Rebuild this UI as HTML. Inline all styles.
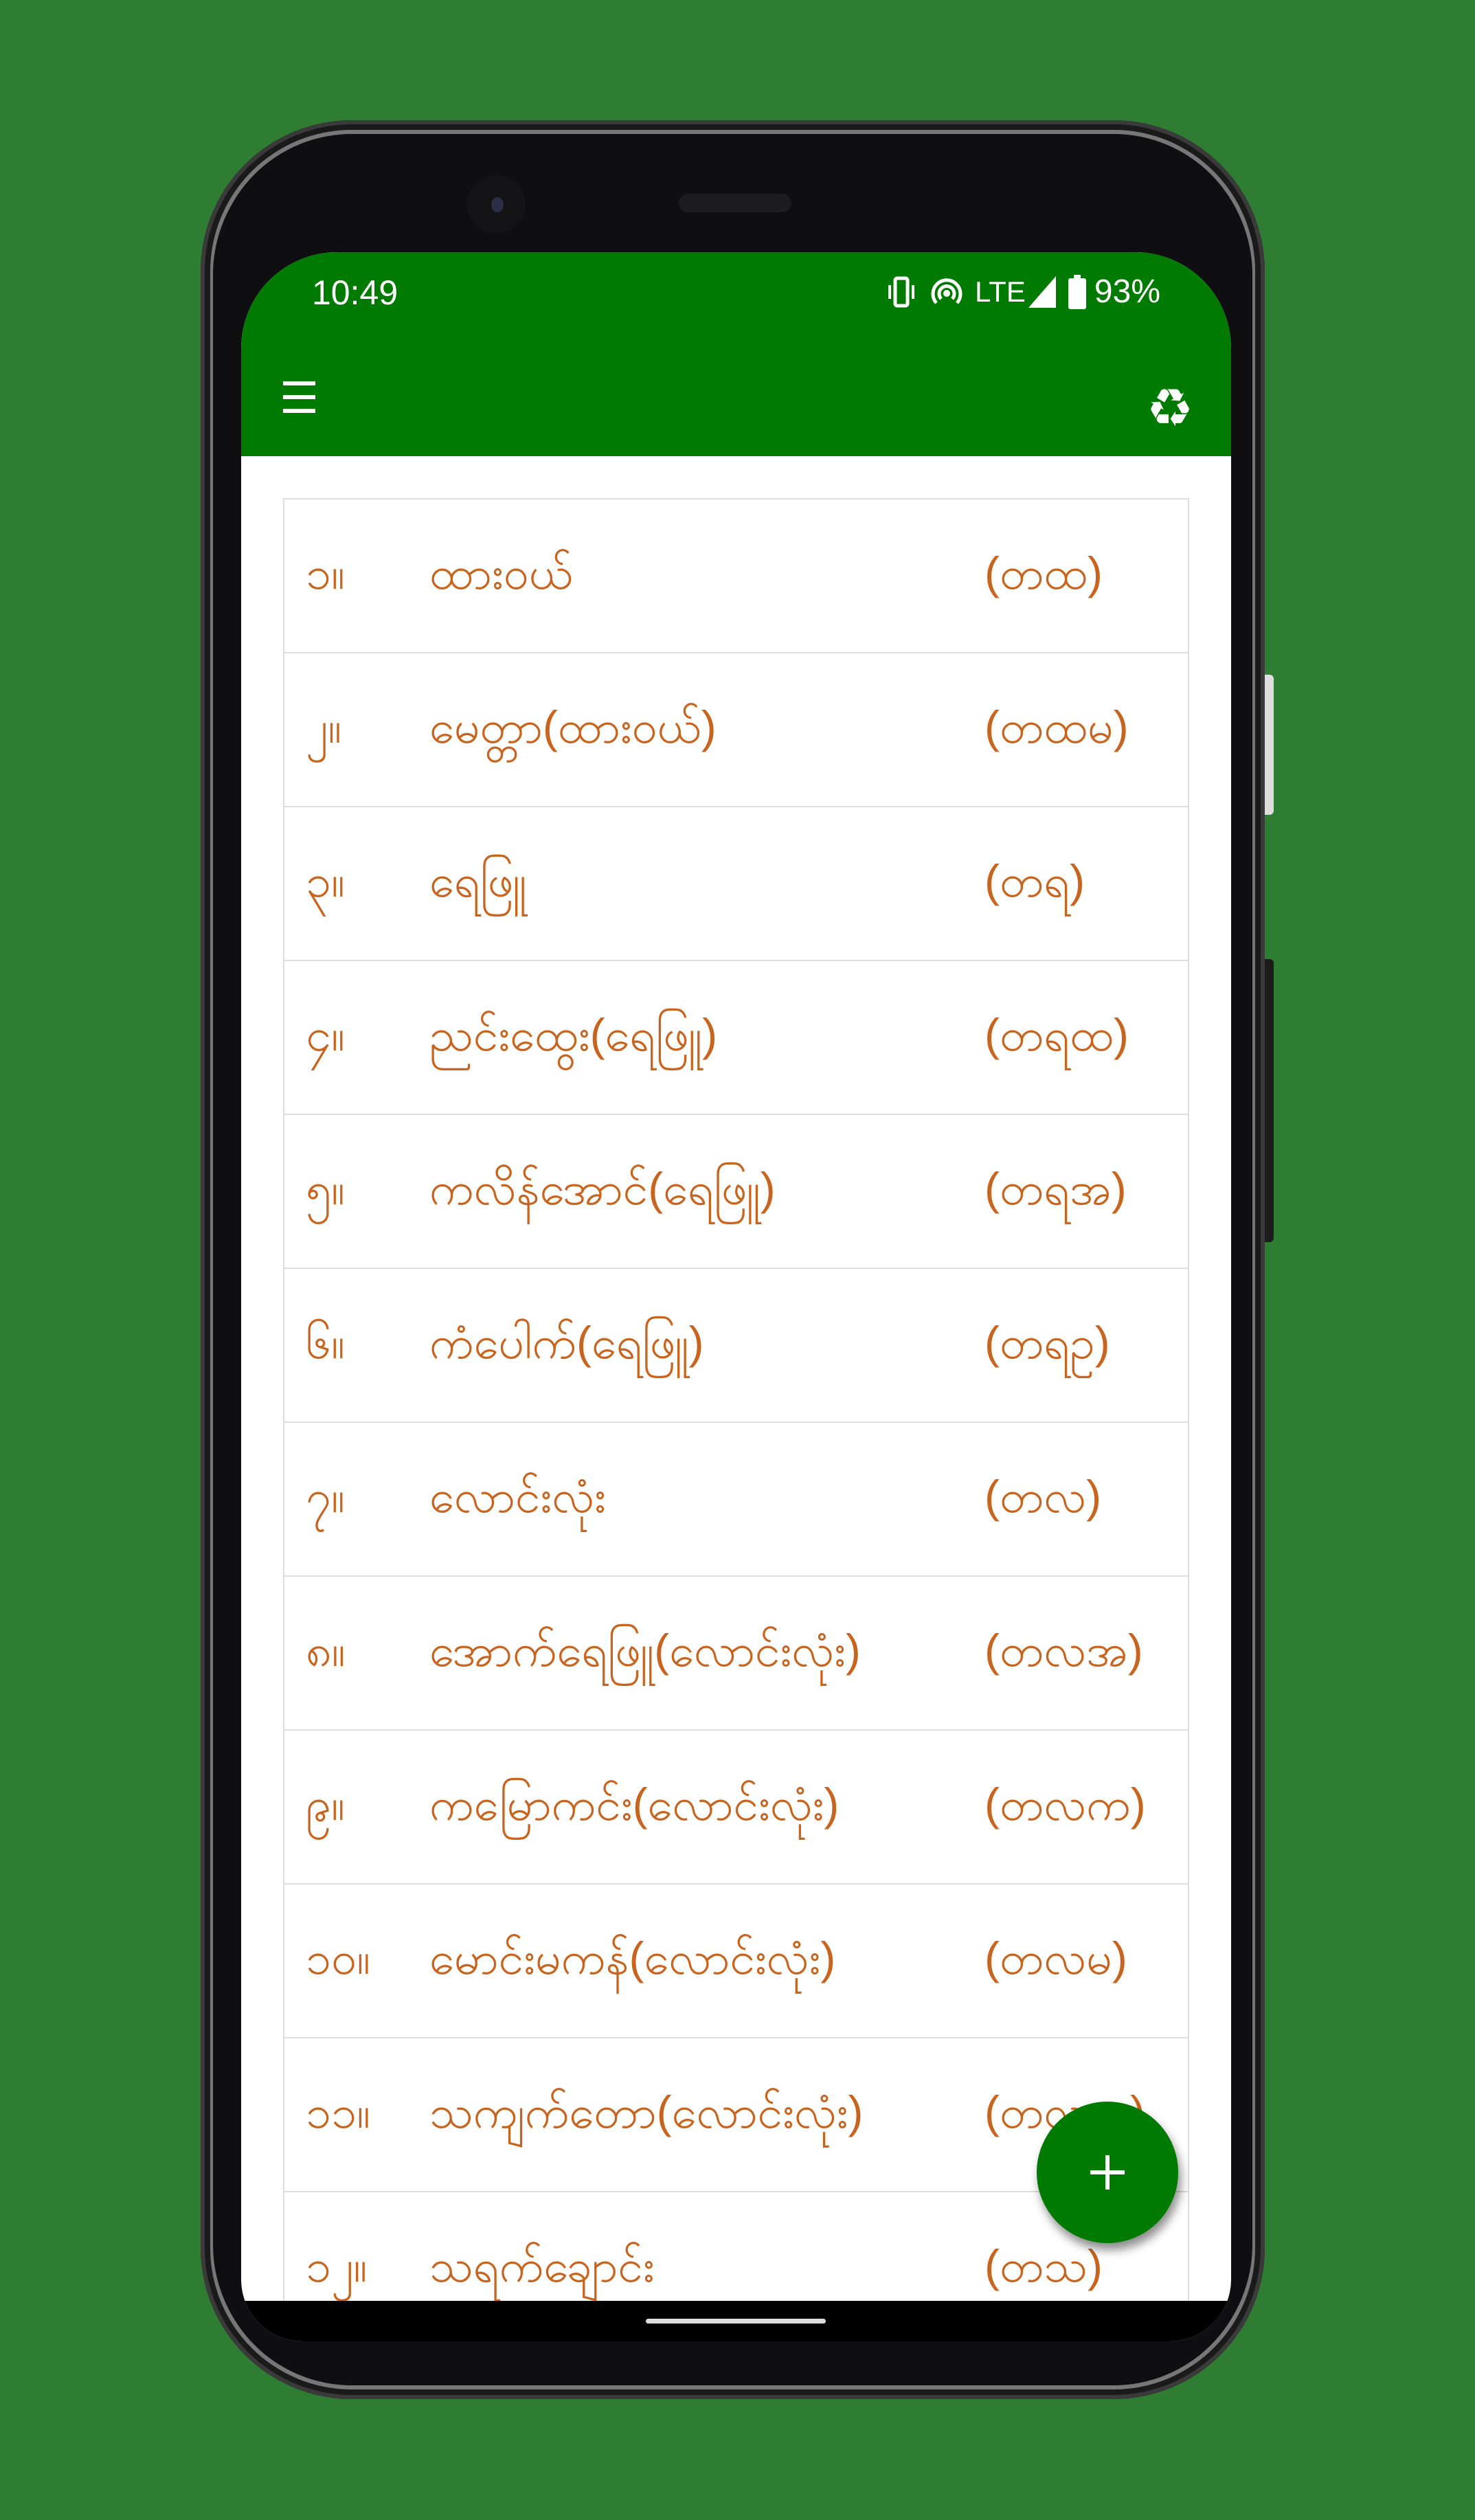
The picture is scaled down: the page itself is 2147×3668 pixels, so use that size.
<!DOCTYPE html>
<html><head><meta charset="utf-8">
<style>
html,body{margin:0;padding:0}
body{width:2147px;height:3668px;background:#2f7d33;position:relative;overflow:hidden;font-family:"Liberation Sans","Noto Sans CJK SC",sans-serif}
.btn{position:absolute;background:#1c1c1c;border-radius:0 6px 6px 0}
.phone{position:absolute;left:292px;top:175px;width:1549px;height:3317px;border-radius:220px;background:#2a2a2c;box-shadow:inset 0 0 0 6px #3a3a3a,inset 0 0 0 14px #1a1a1a,inset 0 0 0 20px #777,inset 0 0 0 26px #111}
.bezel{position:absolute;left:310px;top:195px;width:1513px;height:3277px;border-radius:205px;background:#0f0f11}
.cam{position:absolute;left:680px;top:255px;width:85px;height:85px;border-radius:50%;background:#141416}
.cam i{position:absolute;left:35px;top:32px;width:18px;height:22px;border-radius:50%;background:#2a2f45}
.spk{position:absolute;left:988px;top:282px;width:164px;height:27px;border-radius:14px;background:#1d1d20}
.screen{position:absolute;left:351px;top:367px;width:1441px;height:3041px;border-radius:140px 140px 90px 90px;overflow:hidden;background:#fff}
.status{position:absolute;left:0;top:0;width:100%;height:297px;background:#007a00}
.time{position:absolute;left:103px;top:30px;color:#fff;font-size:50px}
.sr{position:absolute;right:103px;top:30px;color:#fff;font-size:48px;display:flex;align-items:center;gap:18px}
.ham{position:absolute;left:61px;top:188px;width:47px}
.ham i{display:block;height:6px;background:#fff;margin-bottom:14px}
.rec{position:absolute;right:60px;top:180px;color:#fff;font-size:58px}
table{position:absolute;left:61px;top:358px;width:1319px;border-collapse:collapse}
td{border:2px solid #ddd;height:214px;color:#c8641e;font-size:66px;font-family:"Liberation Sans","Noto Sans CJK SC",sans-serif;vertical-align:middle;padding:0 0 8px 0;line-height:1}
td{border-left:none;border-right:none}
tr td:first-child{border-left:2px solid #ddd;padding-left:31px;width:180px}
tr td:last-child{border-right:2px solid #ddd;width:296px}
.nav{position:absolute;left:0;top:2982px;width:100%;height:59px;background:#000}
.nav i{position:absolute;left:589px;top:26px;width:262px;height:7px;border-radius:4px;background:#ddd}
.fab{position:absolute;left:1509px;top:3059px;width:206px;height:206px;border-radius:50%;background:#007a00;box-shadow:4px 10px 14px rgba(0,0,0,.45)}
.fab:before{content:"";position:absolute;left:78px;top:100px;width:50px;height:6px;background:#fff}
.fab:after{content:"";position:absolute;left:100px;top:78px;width:6px;height:50px;background:#fff}
</style></head><body>
<div class="btn" style="left:1838px;top:982px;width:16px;height:204px;background:#ddd"></div>
<div class="btn" style="left:1838px;top:1396px;width:16px;height:412px"></div>
<div class="phone"></div>
<div class="bezel"></div>
<div class="cam"><i></i></div>
<div class="spk"></div>
<div class="screen">
 <div class="status">
  <div class="time">10:49</div>
  <div class="sr">
   <svg width="50" height="48" viewBox="0 0 50 48"><rect x="16" y="4" width="18" height="40" rx="3" fill="none" stroke="#fff" stroke-width="5"/><rect x="6" y="14" width="4" height="20" fill="#fff"/><rect x="40" y="14" width="4" height="20" fill="#fff"/></svg>
   <svg width="46" height="48" viewBox="0 0 46 48"><path d="M8 40A20 20 0 1 1 38 40M15 34A11 11 0 1 1 31 34" fill="none" stroke="#fff" stroke-width="5"/><circle cx="23" cy="26" r="5" fill="#fff"/></svg>
   <span style="font-size:42px">LTE</span>
   <svg width="40" height="46" viewBox="0 0 40 46" style="margin-left:-14px"><path d="M40 0V46H0Z" fill="#fff"/></svg>
   <svg width="26" height="50" viewBox="0 0 26 50"><rect x="8" y="0" width="10" height="6" fill="#fff"/><rect x="0" y="5" width="26" height="45" rx="3" fill="#fff"/></svg>
   <span style="margin-left:-6px">93%</span>
  </div>
  <div class="ham"><i></i><i></i><i></i></div>
  <div class="rec">♻</div>
 </div>
 <table>
  <tr><td>၁။</td><td>ထားဝယ်</td><td>(တထ)</td></tr>
  <tr><td>၂။</td><td>မေတ္တာ(ထားဝယ်)</td><td>(တထမ)</td></tr>
  <tr><td>၃။</td><td>ရေဖြူ</td><td>(တရ)</td></tr>
  <tr><td>၄။</td><td>ညင်းထွေး(ရေဖြူ)</td><td>(တရထ)</td></tr>
  <tr><td>၅။</td><td>ကလိန်အောင်(ရေဖြူ)</td><td>(တရအ)</td></tr>
  <tr><td>၆။</td><td>ကံပေါက်(ရေဖြူ)</td><td>(တရဥ)</td></tr>
  <tr><td>၇။</td><td>လောင်းလုံး</td><td>(တလ)</td></tr>
  <tr><td>၈။</td><td>အောက်ရေဖြူ(လောင်းလုံး)</td><td>(တလအ)</td></tr>
  <tr><td>၉။</td><td>ကမြောကင်း(လောင်းလုံး)</td><td>(တလက)</td></tr>
  <tr><td>၁၀။</td><td>မောင်းမကန်(လောင်းလုံး)</td><td>(တလမ)</td></tr>
  <tr><td>၁၁။</td><td>သကျက်တော(လောင်းလုံး)</td><td>(တလသ)</td></tr>
  <tr><td>၁၂။</td><td>သရက်ချောင်း</td><td>(တသ)</td></tr>
 </table>
 <div class="nav"><i></i></div>
</div>
<div class="fab"></div>
</body></html>
